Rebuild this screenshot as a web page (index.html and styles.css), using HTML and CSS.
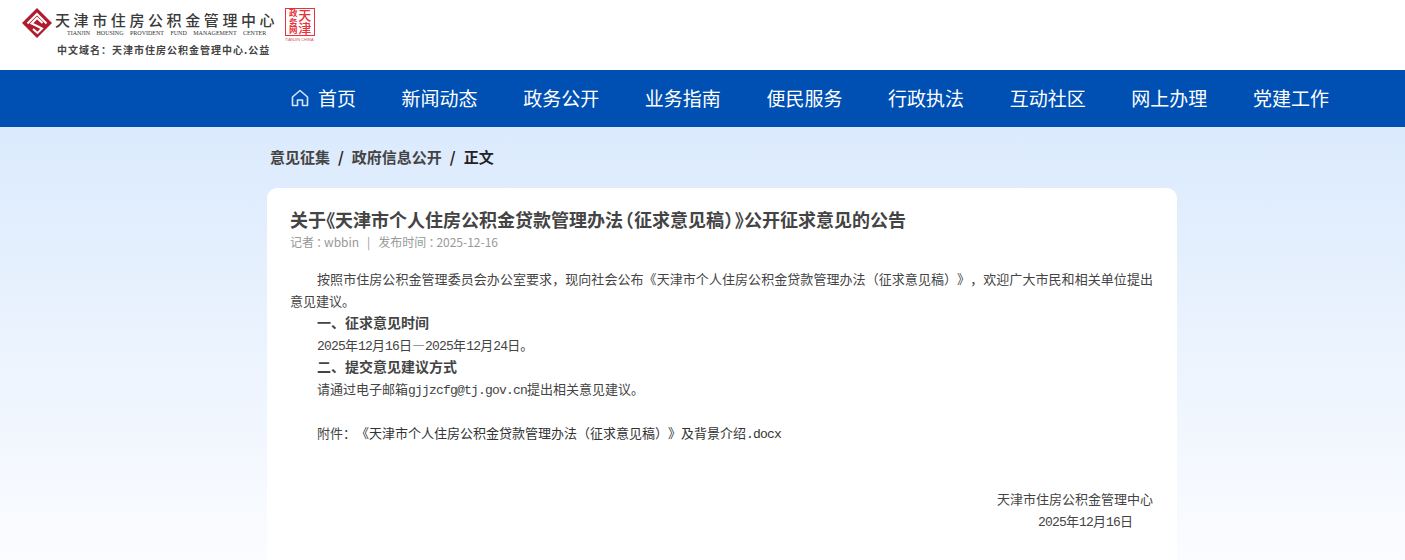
FILE: index.html
```html
<!DOCTYPE html>
<html lang="zh-CN">
<head>
  <meta charset="UTF-8" />
  <title>关于《天津市个人住房公积金贷款管理办法（征求意见稿）》公开征求意见的公告</title>
  <meta name="viewport" content="width=device-width, initial-scale=1.0" />
  <link rel="stylesheet" href="styles.css">
</head>
<body>

<!-- 顶部 logo -->
<header class="top">
  <div class="logo">
    <div class="logo-row">
      <svg class="logo-mark" width="30" height="30" viewBox="0 0 30 30">
        <path d="M15 0 L30 15 L15 30 L0 15 Z" fill="#b01c2e"/>
        <path d="M5.5 15.5 L15 6 L24.5 15.5" fill="none" stroke="#fff" stroke-width="2"/>
        <path d="M20.5 15 L15 10 L9.5 15.5 L15 18 L20 20.5 L15.5 25 L11 21" fill="none" stroke="#fff" stroke-width="2"/>
      </svg>
      <div class="logo-names">
        <div class="logo-cn">天津市住房公积金管理中心</div>
        <div class="logo-en">TIANJIN HOUSING PROVIDENT FUND MANAGEMENT CENTER</div>
      </div>
      <div class="seal">
        <div class="seal-box">
          <span class="seal-small">政务网</span>
          <span class="seal-big">天津</span>
        </div>
        <div class="seal-en">TIANJIN CHINA</div>
      </div>
    </div>
    <div class="logo-domain">中文域名：天津市住房公积金管理中心.公益</div>
  </div>
</header>

<!-- 导航 -->
<nav class="nav">
  <a class="nav-item" href="#">
    <svg class="home-icon" width="18" height="18" viewBox="0 0 18 18" fill="none" stroke="#d5e3f5" stroke-width="1.6" stroke-linejoin="round">
      <path d="M1.5 8 L9 1.5 L16.5 8 V16.5 H11.5 V11 H6.5 V16.5 H1.5 Z"/>
    </svg>
    首页
  </a>
  <a class="nav-item" href="#">新闻动态</a>
  <a class="nav-item" href="#">政务公开</a>
  <a class="nav-item" href="#">业务指南</a>
  <a class="nav-item" href="#">便民服务</a>
  <a class="nav-item" href="#">行政执法</a>
  <a class="nav-item" href="#">互动社区</a>
  <a class="nav-item" href="#">网上办理</a>
  <a class="nav-item" href="#">党建工作</a>
</nav>

<main class="main">
  <div class="crumbs">
    <a href="#">意见征集</a><span class="sep">/</span><a href="#">政府信息公开</a><span class="sep">/</span><span class="current">正文</span>
  </div>

  <article class="card">
    <h1 class="title">关于《天津市个人住房公积金贷款管理办法<span class="bracket">（</span>征求意见稿<span class="bracket">）</span>》公开征求意见的公告</h1>
    <div class="meta">记者<span class="colon">：</span>wbbin<span class="meta-sep">|</span>发布时间<span class="colon">：</span>2025-12-16</div>

    <div class="content">
      <p class="indent">按照市住房公积金管理委员会办公室要求，现向社会公布《天津市个人住房公积金贷款管理办法（征求意见稿）》，欢迎广大市民和相关单位提出意见建议。</p>
      <p class="indent"><strong>一、征求意见时间</strong></p>
      <p class="indent"><span class="en">2025</span>年<span class="en">12</span>月<span class="en">16</span>日—<span class="en">2025</span>年<span class="en">12</span>月<span class="en">24</span>日。</p>
      <p class="indent"><strong>二、提交意见建议方式</strong></p>
      <p class="indent">请通过电子邮箱<span class="en">gjjzcfg@tj.gov.cn</span>提出相关意见建议。</p>
      <p class="blank"></p>
      <p class="indent attach">附件：<a href="#">《天津市个人住房公积金贷款管理办法（征求意见稿）》及背景介绍<span class="en">.docx</span></a></p>
      <p class="blank"></p>
      <p class="blank"></p>
      <p class="sign">天津市住房公积金管理中心</p>
      <p class="sign sign-date"><span class="en">2025</span>年<span class="en">12</span>月<span class="en">16</span>日</p>
    </div>
  </article>
</main>

</body>
</html>
```

FILE: styles.css
```css
html, body {
  height: 100%;
}

body {
  margin: 0;
  overflow: hidden;
  background: #fff;
  font-family: "Noto Sans CJK SC", "Noto Sans", sans-serif;
  color: #333;
}

a {
  color: inherit;
  text-decoration: none;
}

/* logo */
.top {
  height: 70px;
  background: #fff;
  padding: 8px 0 0 22px;
  box-sizing: border-box;
}

.logo-row {
  display: flex;
  align-items: flex-start;
}

.logo-mark {
  flex: none;
}

.logo-names {
  margin: 2px 0 0 3px;
  width: 230px;
  flex: none;
}

.logo-cn {
  font-size: 15px;
  line-height: 20px;
  letter-spacing: 3.6px;
  font-weight: 500;
  color: #3a3a3a;
  white-space: nowrap;
}

.logo-en {
  margin: 0 0 0 12px;
  font-family: "Liberation Serif", serif;
  font-size: 6px;
  line-height: 7px;
  word-spacing: 5px;
  color: #333;
  white-space: nowrap;
}

.seal {
  flex: none;
  width: 30px;
}

.seal-box {
  height: 28px;
  box-sizing: border-box;
  border: 1px solid #e8323c;
  display: flex;
  justify-content: center;
  align-items: center;
  gap: 1px;
  color: #e8323c;
  line-height: 1;
}

.seal-small {
  writing-mode: vertical-rl;
  font-size: 8.5px;
  font-weight: 700;
}

.seal-big {
  writing-mode: vertical-rl;
  font-size: 13px;
  font-weight: 500;
}

.seal-en {
  margin-top: 1px;
  font-family: "Liberation Sans", sans-serif;
  font-size: 4px;
  line-height: 5px;
  color: #d8505a;
  white-space: nowrap;
}

.logo-domain {
  margin: 1px 0 0 35px;
  font-size: 10px;
  line-height: 14px;
  letter-spacing: 1px;
  font-weight: 700;
  color: #444;
  white-space: nowrap;
}

/* nav */
.nav {
  height: 57px;
  box-sizing: border-box;
  padding: 0 0 2px 291px;
  background: #0050b3;
  display: flex;
  align-items: center;
  gap: 45.6px;
}

.nav-item {
  display: flex;
  align-items: center;
  gap: 9px;
  font-size: 19px;
  color: #fff;
  white-space: nowrap;
}

/* main */
.main {
  height: 433px;
  box-sizing: border-box;
  padding: 0 0 0 267px;
  overflow: hidden;
  background: linear-gradient(#dbeafd, #fbfcff);
}

.crumbs {
  height: 61px;
  box-sizing: border-box;
  padding: 0 0 2px 3px;
  display: flex;
  align-items: center;
  font-size: 15px;
  font-weight: 700;
  color: #444;
}

.sep {
  margin: 0 8px;
  color: #222;
}

.current {
  color: #222;
}

.card {
  width: 910px;
  height: 372px;
  box-sizing: border-box;
  padding: 19px 24px 0 23px;
  background: #fff;
  border-radius: 10px 10px 0 0;
}

.title {
  margin: 0;
  font-size: 18px;
  line-height: 24px;
  font-weight: 700;
  color: #444;
  font-feature-settings: "palt";
  white-space: nowrap;
}

.bracket {
  margin: 0 1px;
}

.meta {
  margin-top: 2px;
  font-family: "Noto Sans CJK TC", "Noto Sans", sans-serif;
  font-feature-settings: "palt";
  font-size: 12px;
  line-height: 18px;
  color: #999;
}

.colon {
  margin: 0 2px;
}

.meta-sep {
  margin: 0 8px;
}

.content {
  margin-top: 17px;
  font-size: 13px;
  line-height: 22px;
  color: #444;
  text-spacing-trim: space-all;
}

.content p {
  margin: 0;
  text-align: justify;
}

.content strong {
  font-size: 14px;
  line-height: 0;
}

.indent {
  text-indent: 27px;
}

.blank {
  height: 22px;
}

.en {
  font-family: "Liberation Mono", monospace;
  font-size: 13px;
  letter-spacing: -0.8px;
  line-height: 0;
}

.attach a {
  color: #333;
}

.content .sign {
  text-align: right;
}

.content .sign-date {
  padding-right: 20px;
}
```
